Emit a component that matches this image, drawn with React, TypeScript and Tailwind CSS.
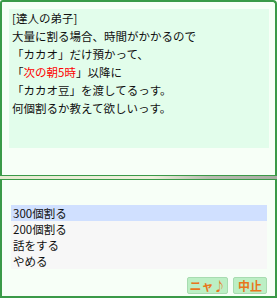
import React from "react";

export default function App() {
  const font = { fontFamily: '"Noto Sans CJK JP", "Noto Sans", sans-serif' };
  return (
    <div className="w-[278px] h-[298px] bg-white overflow-hidden" style={font}>
      <div className="w-[277px] h-[298px] flex flex-col">
        {/* top panel */}
        <div className="h-[175px] border-l-2 border-t-2 border-r-2 border-[#3a9a48] rounded-tl-[3px] rounded-tr-[4px] bg-[#f7fff7] pl-[7px] pr-[6px] pt-[7px]">
          <div className="w-[260px] h-[139px] bg-[#e2fdeb] pl-[3px] text-[11.5px] leading-[18px] text-[#111]">
            <div>[達人の弟子]</div>
            <div>大量に割る場合、時間がかかるので</div>
            <div>「カカオ」だけ預かって、</div>
            <div>
              「<span className="text-[#ff0000]">次の朝5時</span>」以降に
            </div>
            <div>「カカオ豆」を渡してるっす。</div>
            <div>何個割るか教えて欲しいっす。</div>
          </div>
        </div>
        {/* separator */}
        <div className="h-[5px] border-y border-[#3a9a48] bg-[linear-gradient(to_right,#e6ead0_0%,#eef0dc_55%,#b8bcb0_75%,#a8aca4_100%)]" />
        {/* bottom panel */}
        <div className="flex-1 border-l-2 border-r-2 border-b-2 border-[#3a9a48] bg-[#f7fff7] pl-[9px] pr-[8px] pt-[25px] flex flex-col">
          <div className="w-[256px] bg-[#f7f7f7] text-[11.5px] leading-[16px] text-[#111]">
            <div className="bg-[#d0e0ff] pl-[2px] h-[16px]">300個割る</div>
            <div className="pl-[2px] h-[16px]">200個割る</div>
            <div className="pl-[2px] h-[16px]">話をする</div>
            <div className="pl-[2px] h-[16px]">やめる</div>
          </div>
          <div className="flex justify-end gap-[5px] mt-[8px] w-[256px]">
            <div className="w-[41px] h-[17px] rounded-[2px] bg-[#bcefc4] border border-[#a8dcb0] text-[#e8761c] font-bold text-[12px] leading-[15px] text-center">
              ニャ♪
            </div>
            <div className="w-[34px] h-[17px] rounded-[2px] bg-[#bcefc4] border border-[#a8dcb0] text-[#e8761c] font-bold text-[12px] leading-[15px] text-center">
              中止
            </div>
          </div>
        </div>
      </div>
    </div>
  );
}
